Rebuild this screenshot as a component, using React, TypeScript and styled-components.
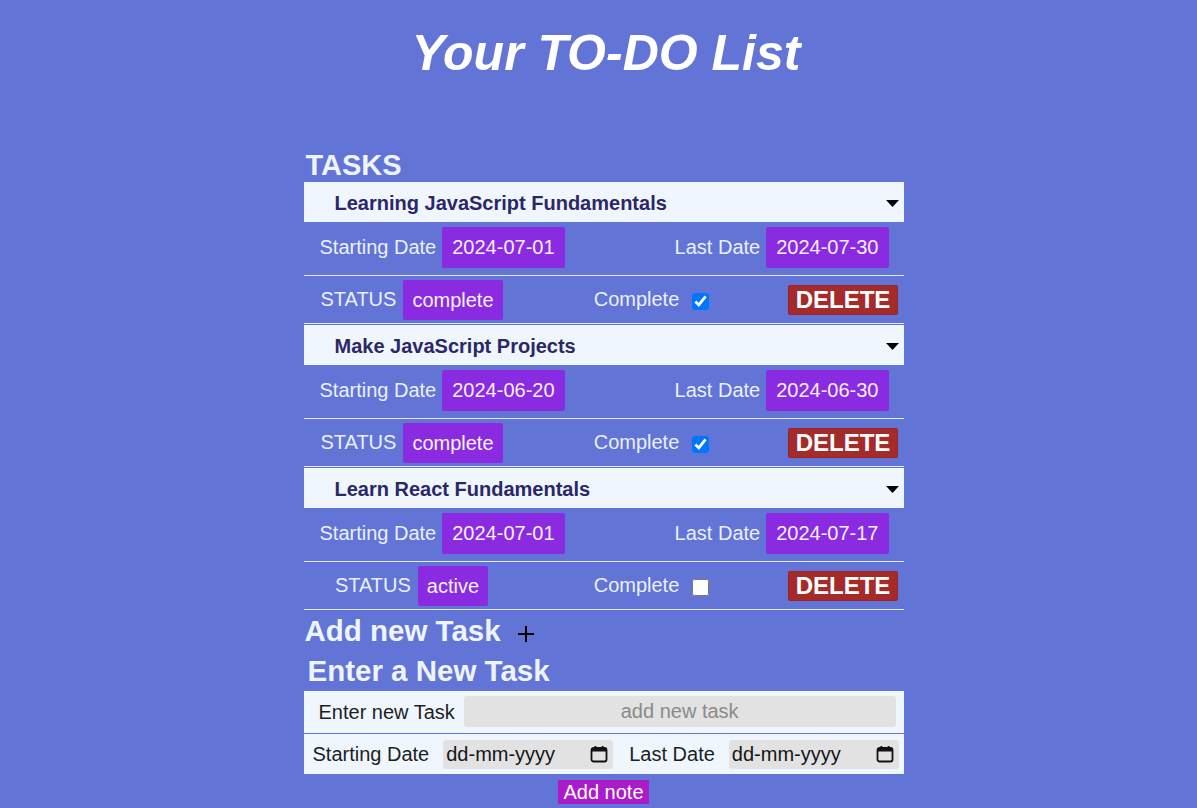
import React from "react";
import styled, { createGlobalStyle } from "styled-components";

const GlobalStyle = createGlobalStyle`
  html, body { margin: 0; padding: 0; }
  body {
    background: #6274d6;
    font-family: "Liberation Sans", Arial, sans-serif;
    min-height: 808px;
  }
`;

const Page = styled.div`
  display: flex;
  flex-direction: column;
  align-items: center;
  padding: 28px 0 0 10px;
`;

const Title = styled.h1`
  margin: 0;
  padding-left: 5px;
  font-size: 50px;
  line-height: 1;
  font-weight: 700;
  font-style: italic;
  color: #ffffff;
`;

const Main = styled.main`
  width: 600px;
  margin-top: 73px;
  display: flex;
  flex-direction: column;
`;

const Heading = styled.h2<{ $size?: number; $indent?: number; $mt?: number }>`
  margin: ${(p) => p.$mt ?? 0}px 0 0 0;
  font-size: ${(p) => p.$size ?? 29}px;
  line-height: 1;
  font-weight: 700;
  color: #eef4fc;
  padding-left: ${(p) => p.$indent ?? 2}px;
  display: flex;
  align-items: center;
`;

const TaskList = styled.div`
  margin-top: 2px;
  display: flex;
  flex-direction: column;
`;

const Task = styled.section`
  display: flex;
  flex-direction: column;
  margin-bottom: 1px;
`;

const TaskHeader = styled.div`
  height: 40px;
  box-sizing: border-box;
  padding: 2px 5px 0 31px;
  background: #eff6fe;
  display: flex;
  align-items: center;
  justify-content: space-between;
  font-size: 20px;
  font-weight: 700;
  color: #2c2766;
`;

const DateRow = styled.div`
  height: 51px;
  display: flex;
  align-items: center;
  justify-content: space-between;
  padding: 0 15px 2px 16px;
  border-bottom: 1px solid #e3eafb;
`;

const StatusRow = styled.div`
  height: 47px;
  display: grid;
  grid-template-columns: 216px 264px 119px;
  justify-items: center;
  align-items: center;
  border-bottom: 1px solid #e3eafb;
`;

const Group = styled.div<{ $gap: number }>`
  display: flex;
  align-items: center;
  gap: ${(p) => p.$gap}px;
`;

const Label = styled.span`
  font-size: 20px;
  color: #eaf0fb;
`;

const Pill = styled.span<{ $h: number; $px?: number }>`
  display: inline-block;
  background: #8a2be2;
  color: #f4f0ff;
  font-size: 20px;
  line-height: ${(p) => p.$h}px;
  padding: 0 ${(p) => p.$px ?? 10}px;
  border-radius: 2px;
`;

const Check = styled.input`
  width: 17px;
  height: 17px;
  margin: 4px 0 0 0;
`;

const DeleteButton = styled.button`
  background: #a52a2a;
  color: #ffffff;
  border: 1px solid #9a2323;
  border-radius: 2px;
  font-family: "Liberation Sans", Arial, sans-serif;
  font-size: 24px;
  font-weight: 700;
  height: 30px;
  padding: 0 7px;
  line-height: 28px;
  cursor: pointer;
`;

const PlusIcon = styled.svg`
  margin-left: 17px;
  margin-top: 6px;
`;

const Form = styled.form`
  margin-top: 6px;
  display: flex;
  flex-direction: column;
  gap: 1px;
`;

const FormRow = styled.div<{ $h: number; $pl: number; $pr: number }>`
  height: ${(p) => p.$h}px;
  background: #eff6fe;
  display: flex;
  align-items: center;
  padding: 0 ${(p) => p.$pr}px 0 ${(p) => p.$pl}px;
`;

const FormLabel = styled.label<{ $ml?: number }>`
  font-size: 20px;
  color: #1e1e1e;
  margin-left: ${(p) => p.$ml ?? 0}px;
  white-space: nowrap;
`;

const TextInput = styled.input`
  flex: 1;
  height: 31px;
  margin-left: 9px;
  margin-top: -1px;
  border: none;
  border-radius: 3px;
  background: #e2e2e2;
  font-family: "Liberation Sans", Arial, sans-serif;
  font-size: 20px;
  text-align: center;
  padding: 0;
  outline: none;
  &::placeholder { color: #8a8a8a; }
`;

const DateField = styled.div`
  width: 170px;
  height: 29px;
  margin-left: 14px;
  box-sizing: border-box;
  background: #e2e2e2;
  border-radius: 3px;
  display: flex;
  align-items: center;
  justify-content: space-between;
  padding: 0 5px 0 3px;
  font-size: 20px;
  color: #151515;
`;

const AddNote = styled.button`
  align-self: center;
  margin-top: 6px;
  background: #a91cc8;
  color: #ffffff;
  border: none;
  border-radius: 0;
  font-family: "Liberation Sans", Arial, sans-serif;
  font-size: 20px;
  height: 24px;
  line-height: 24px;
  padding: 0 5px;
`;

type TaskData = {
  title: string;
  start: string;
  end: string;
  status: string;
  done: boolean;
};

const tasks: TaskData[] = [
  { title: "Learning JavaScript Fundamentals", start: "2024-07-01", end: "2024-07-30", status: "complete", done: true },
  { title: "Make JavaScript Projects", start: "2024-06-20", end: "2024-06-30", status: "complete", done: true },
  { title: "Learn React Fundamentals", start: "2024-07-01", end: "2024-07-17", status: "active", done: false },
];

const Caret = () => (
  <svg width="13" height="7" viewBox="0 0 13 7">
    <polygon points="0,0 13,0 6.5,7" fill="#000" />
  </svg>
);

const CalendarIcon = () => (
  <svg width="18" height="18" viewBox="0 0 18 18" fill="none">
    <rect x="1.5" y="3" width="15" height="13.5" rx="2" stroke="#111" strokeWidth="1.8" />
    <rect x="1.5" y="3" width="15" height="3.5" fill="#111" />
    <rect x="4.5" y="1" width="1.8" height="3" fill="#111" />
    <rect x="11.7" y="1" width="1.8" height="3" fill="#111" />
  </svg>
);

export default function App() {
  return (
    <>
      <GlobalStyle />
      <Page>
        <Title>Your TO-DO List</Title>
        <Main>
          <Heading $size={29}>TASKS</Heading>
          <TaskList>
            {tasks.map((t) => (
              <Task key={t.title}>
                <TaskHeader>
                  <span>{t.title}</span>
                  <Caret />
                </TaskHeader>
                <DateRow>
                  <Group $gap={6}>
                    <Label>Starting Date</Label>
                    <Pill $h={41}>{t.start}</Pill>
                  </Group>
                  <Group $gap={6}>
                    <Label>Last Date</Label>
                    <Pill $h={41}>{t.end}</Pill>
                  </Group>
                </DateRow>
                <StatusRow>
                  <Group $gap={7}>
                    <Label>STATUS</Label>
                    <Pill $h={40} $px={9}>{t.status}</Pill>
                  </Group>
                  <Group $gap={13}>
                    <Label>Complete</Label>
                    <Check type="checkbox" defaultChecked={t.done} />
                  </Group>
                  <DeleteButton>DELETE</DeleteButton>
                </StatusRow>
              </Task>
            ))}
          </TaskList>
          <Heading $size={29.5} $indent={1} $mt={5}>
            Add new Task
            <PlusIcon width="16" height="16" viewBox="0 0 16 16">
              <path d="M8 0V16M0 8H16" stroke="#000" strokeWidth="2" />
            </PlusIcon>
          </Heading>
          <Heading $size={29.5} $indent={4} $mt={10}>
            Enter a New Task
          </Heading>
          <Form onSubmit={(e) => e.preventDefault()}>
            <FormRow $h={42} $pl={15} $pr={8}>
              <FormLabel>Enter new Task</FormLabel>
              <TextInput placeholder="add new task" />
            </FormRow>
            <FormRow $h={40} $pl={9} $pr={4}>
              <FormLabel>Starting Date</FormLabel>
              <DateField>
                <span>dd-mm-yyyy</span>
                <CalendarIcon />
              </DateField>
              <FormLabel $ml={16}>Last Date</FormLabel>
              <DateField>
                <span>dd-mm-yyyy</span>
                <CalendarIcon />
              </DateField>
            </FormRow>
          </Form>
          <AddNote type="button">Add note</AddNote>
        </Main>
      </Page>
    </>
  );
}
